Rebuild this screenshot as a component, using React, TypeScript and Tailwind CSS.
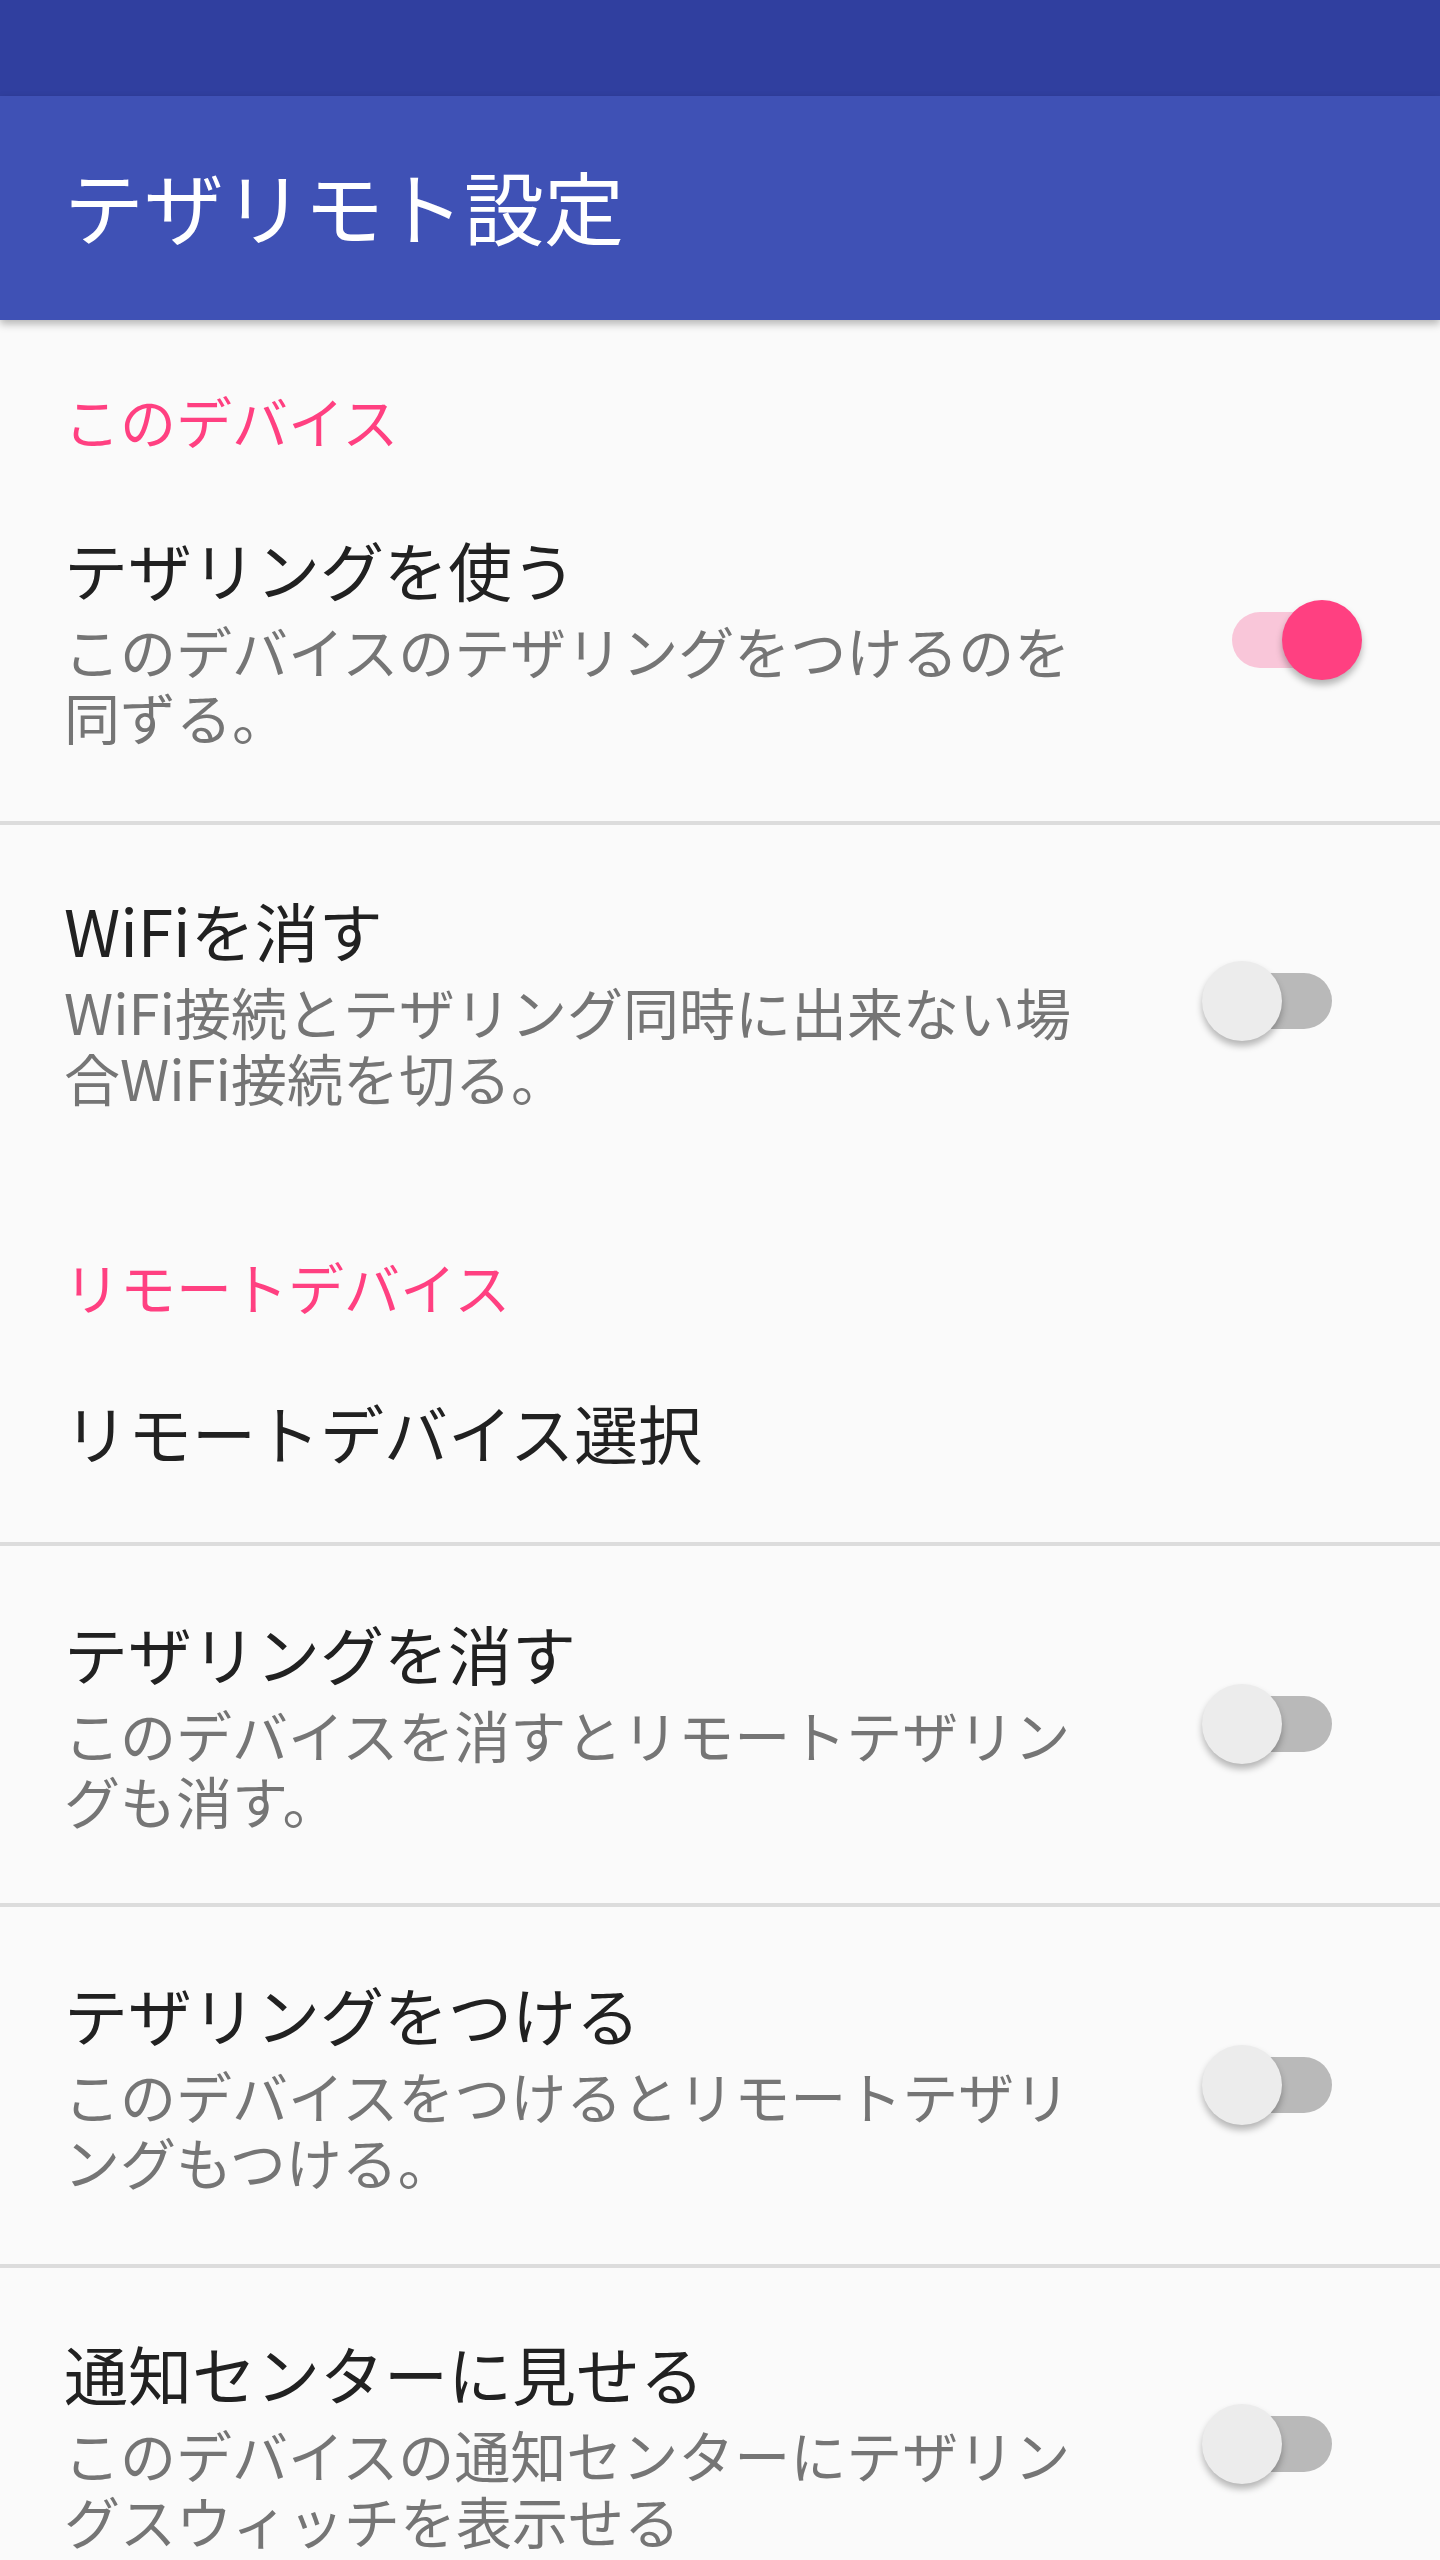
type SwitchProps = { on: boolean };

const Switch = ({ on }: SwitchProps) => (
  <div className="relative w-[160px] h-[80px] shrink-0">
    <div
      className={`absolute left-[30px] top-[12px] w-[100px] h-[56px] rounded-full ${
        on ? "bg-[#f9c6d9]" : "bg-[#b9b9b9]"
      }`}
    />
    <div
      className={`absolute top-0 w-[80px] h-[80px] rounded-full shadow-[0_5px_7px_rgba(0,0,0,0.28)] ${
        on ? "left-[80px] bg-[#ff4081]" : "left-0 bg-[#ececec]"
      }`}
    />
  </div>
);

const Category = ({ label, pt }: { label: string; pt: string }) => (
  <div className={`px-[64px] ${pt}`}>
    <div className="text-[56px] leading-[66px] text-[#ff4081]">{label}</div>
  </div>
);

type ItemProps = {
  title: string;
  summary?: string;
  on?: boolean;
  pad: string;
  divider?: boolean;
};

const Item = ({ title, summary, on, pad, divider }: ItemProps) => (
  <div className={divider ? "border-b-[4px] border-[#dcdcdc]" : ""}>
    <div className={`flex items-center pl-[64px] pr-[78px] ${pad}`}>
      <div className="flex-1 min-w-0">
        <div className="text-[64px] leading-[76px] text-[#212121] whitespace-nowrap">
          {title}
        </div>
        {summary && (
          <div className="mt-[11px] w-[1040px] text-[56px] leading-[66px] text-[#757575]">
            {summary}
          </div>
        )}
      </div>
      {on !== undefined && <Switch on={on} />}
    </div>
  </div>
);

export default function App() {
  return (
    <div className="w-[1440px] h-[2560px] overflow-hidden bg-[#fafafa] font-['Noto_Sans_CJK_JP','Noto_Sans',sans-serif]">
      <div className="h-[96px] bg-[#303f9f]" />
      <div className="relative z-10 h-[224px] bg-[#3f51b5] flex items-center px-[64px] pb-[8px] shadow-[0_4px_8px_rgba(0,0,0,0.28)]">
        <span className="text-[80px] leading-[80px] text-white">テザリモト設定</span>
      </div>

      <Category label="このデバイス" pt="pt-[67px]" />
      <Item
        title="テザリングを使う"
        summary="このデバイスのテザリングをつけるのを同ずる。"
        on
        pad="pt-[77px] pb-[72px]"
        divider
      />
      <Item
        title="WiFiを消す"
        summary="WiFi接続とテザリング同時に出来ない場合WiFi接続を切る。"
        on={false}
        pad="pt-[66px] pb-[71px]"
      />

      <Category label="リモートデバイス" pt="pt-[72px]" />
      <Item title="リモートデバイス選択" pad="pt-[74px] pb-[73px]" divider />
      <Item
        title="テザリングを消す"
        summary="このデバイスを消すとリモートテザリングも消す。"
        on={false}
        pad="pt-[68px] pb-[70px]"
        divider
      />
      <Item
        title="テザリングをつける"
        summary="このデバイスをつけるとリモートテザリングもつける。"
        on={false}
        pad="pt-[68px] pb-[70px]"
        divider
      />
      <Item
        title="通知センターに見せる"
        summary="このデバイスの通知センターにテザリングスウィッチを表示せる"
        on={false}
        pad="pt-[66px] pb-[72px]"
      />
    </div>
  );
}
